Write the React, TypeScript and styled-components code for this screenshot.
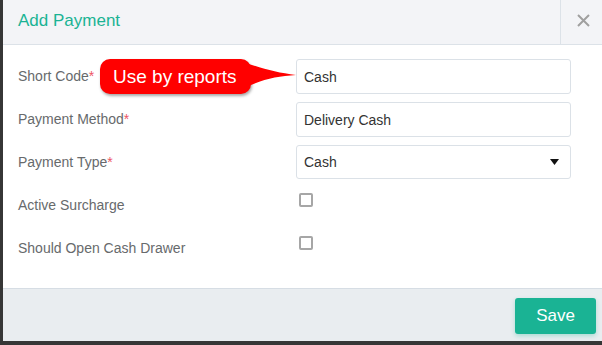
import React from "react";
import styled, { createGlobalStyle } from "styled-components";

const GlobalStyle = createGlobalStyle`
  html, body {
    margin: 0;
    padding: 0;
    width: 602px;
    height: 345px;
    overflow: hidden;
    background-color: #363636;
    font-family: "Liberation Sans", Arial, sans-serif;
  }
`;

const Modal = styled.div`
  margin-left: 3px;
  width: 610px;
  height: 341px;
  background-color: #fff;
  display: flex;
  flex-direction: column;
`;

const Header = styled.div`
  height: 44px;
  display: flex;
  background-color: #f3f4f7;
  border-bottom: 1px solid #dce2e8;
  h4 {
    flex: 1;
    margin: 0;
    padding-left: 15px;
    line-height: 41px;
    font-size: 17px;
    font-weight: normal;
    color: #1ab394;
  }
`;

const CloseButton = styled.button`
  width: 53px;
  height: 44px;
  padding: 0 0 4px 16px;
  border: none;
  border-left: 1px solid #dce2e8;
  background: transparent;
  display: flex;
  align-items: center;
  justify-content: flex-start;
`;

const Body = styled.div`
  position: relative;
  flex: 1;
  padding: 14px 0 0 15px;
`;

const Row = styled.div`
  display: grid;
  grid-template-columns: 278px 275px;
  height: 35px;
  margin-bottom: 8px;
`;

const Label = styled.label`
  font-size: 14px;
  line-height: 35px;
  color: #676a6c;
  span {
    color: #ed5565;
  }
`;

const TextInput = styled.input`
  box-sizing: border-box;
  width: 275px;
  height: 35px;
  border: 1px solid #dbe1e7;
  border-radius: 3px;
  padding: 0 7px;
  font-family: "Liberation Sans", Arial, sans-serif;
  font-size: 14px;
  color: #333;
  outline: none;
`;

const SelectWrap = styled.div`
  position: relative;
  width: 275px;
  height: 34px;
  svg {
    position: absolute;
    right: 12px;
    top: 14px;
  }
`;

const Select = styled.select`
  box-sizing: border-box;
  width: 100%;
  height: 34px;
  appearance: none;
  border: 1px solid #dbe1e7;
  border-radius: 3px;
  padding: 0 7px;
  background: #fff;
  font-family: "Liberation Sans", Arial, sans-serif;
  font-size: 14px;
  color: #333;
  outline: none;
`;

const Check = styled.span`
  display: block;
  box-sizing: border-box;
  margin: 5px 0 0 3px;
  width: 14px;
  height: 14px;
  border: 2px solid #a6a6a6;
  border-radius: 2px;
`;

const Callout = styled.div`
  position: absolute;
  left: 97px;
  top: 14px;
  width: 151px;
  height: 35px;
  box-sizing: border-box;
  padding-left: 13px;
  background-color: #ff0000;
  border-radius: 10px;
  box-shadow: 1px 2px 3px rgba(0, 0, 0, 0.35);
  color: #fff;
  font-size: 19px;
  line-height: 35px;
  overflow: hidden;
  span {
    display: block;
    height: 29px;
    overflow: hidden;
  }
`;

const Tail = styled.svg`
  position: absolute;
  left: 243px;
  top: 15px;
`;

const Footer = styled.div`
  height: 53px;
  box-sizing: border-box;
  border-top: 1px solid #d6dde4;
  background-color: #e9edf0;
  display: flex;
  justify-content: flex-end;
  padding: 9px 17px 0 0;
`;

const SaveButton = styled.button`
  width: 81px;
  height: 36px;
  border: none;
  border-radius: 3px;
  background-color: #1ab394;
  color: #fff;
  font-family: "Liberation Sans", Arial, sans-serif;
  font-size: 17px;
  box-shadow: 0 2px 4px rgba(26, 179, 148, 0.3);
`;

const App = () => {
  return (
    <>
      <GlobalStyle />
      <Modal>
        <Header>
          <h4>Add Payment</h4>
          <CloseButton>
            <svg width="13" height="13" viewBox="0 0 13 13">
              <path d="M1 1 L12 12 M12 1 L1 12" stroke="#a0a0a0" strokeWidth="2" />
            </svg>
          </CloseButton>
        </Header>
        <Body>
          <Row>
            <Label>
              Short Code<span>*</span>
            </Label>
            <TextInput defaultValue="Cash" />
          </Row>
          <Row>
            <Label>
              Payment Method<span>*</span>
            </Label>
            <TextInput defaultValue="Delivery Cash" />
          </Row>
          <Row>
            <Label>
              Payment Type<span>*</span>
            </Label>
            <SelectWrap>
              <Select defaultValue="Cash">
                <option>Cash</option>
              </Select>
              <svg width="9" height="6" viewBox="0 0 9 6">
                <path d="M0 0 L9 0 L4.5 6 Z" fill="#111" />
              </svg>
            </SelectWrap>
          </Row>
          <Row>
            <Label>Active Surcharge</Label>
            <Check />
          </Row>
          <Row>
            <Label>Should Open Cash Drawer</Label>
            <Check />
          </Row>
          <Callout>
            <span>Use by reports</span>
          </Callout>
          <Tail width="52" height="30" viewBox="0 0 52 30">
            <path d="M0 3 C18 9 32 13 50 15 C32 16 18 19 0 27 Z" fill="#ff0000" />
          </Tail>
        </Body>
        <Footer>
          <SaveButton>Save</SaveButton>
        </Footer>
      </Modal>
    </>
  );
};

export default App;
